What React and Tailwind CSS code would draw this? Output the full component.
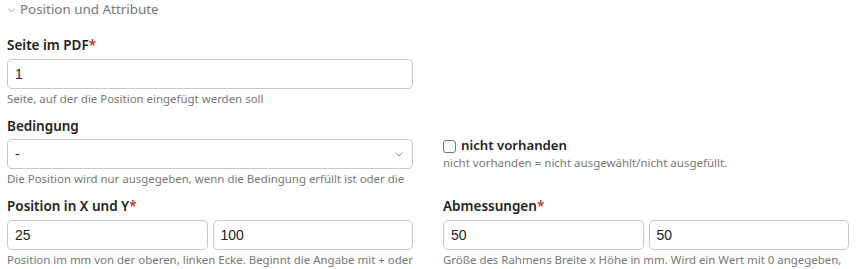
export default function App() {
  const font = { fontFamily: '"Noto Sans", "Open Sans", sans-serif' };
  const Label = ({ children, req }) => (
    <div className="h-[20px] leading-[20px] text-[13.5px] font-semibold text-[#222] mb-[4px]">
      {children}
      {req && <span className="text-[#c9302c]">*</span>}
    </div>
  );
  const Help = ({ children }) => (
    <div className="h-[20px] leading-[20px] text-[11.45px] text-[#777] whitespace-nowrap overflow-hidden">
      {children}
    </div>
  );
  const Input = ({ value }) => (
    <div className="h-[30px] border border-[#c8c8c8] rounded-[5px] bg-white flex items-center px-[7px] text-[14px] text-[#222] font-['Liberation_Sans',sans-serif] flex-1 min-w-0">
      {value}
    </div>
  );
  return (
    <div className="w-[857px] h-[269px] bg-white overflow-hidden pl-[7px] pr-[8px]" style={font}>
      <div className="h-[20px] flex items-center gap-[5px] text-[13.4px] text-[#777] -mt-[1px]">
        <svg width="7" height="5" viewBox="0 0 7 5" className="ml-[1px] mt-[3px]">
          <polyline points="0.5,0.8 3.5,3.8 6.5,0.8" fill="none" stroke="#999" strokeWidth="1" />
        </svg>
        <span>Position und Attribute</span>
      </div>
      <div className="h-[16px]" />
      <div className="grid grid-cols-2 gap-x-[30px]">
        <div>
          <Label req>Seite im PDF</Label>
          <Input value="1" />
          <Help>Seite, auf der die Position eingefügt werden soll</Help>
        </div>
        <div />
        <div className="mt-[7px]">
          <div className="h-[20px] leading-[20px] text-[13.5px] font-semibold text-[#222] mb-[3px]">Bedingung</div>
          <div className="h-[30px] border border-[#c8c8c8] rounded-[5px] bg-white flex items-center justify-between px-[7px] text-[14px] text-[#222] font-['Liberation_Sans',sans-serif]">
            <span>-</span>
            <svg width="8" height="5" viewBox="0 0 8 5" className="mr-[2px]">
              <polyline points="0.5,0.5 4,4 7.5,0.5" fill="none" stroke="#999" strokeWidth="1" />
            </svg>
          </div>
          <Help>Die Position wird nur ausgegeben, wenn die Bedingung erfüllt ist oder die</Help>
        </div>
        <div className="mt-[7px] pt-[20px]">
          <div className="h-[20px] flex items-center gap-[5px] text-[13.2px] font-semibold text-[#222]">
            <span className="w-[13px] h-[13px] border border-[#777] rounded-[3px] bg-white inline-block" />
            <span>nicht vorhanden</span>
          </div>
          <div className="h-[12px] leading-[12px] text-[11.5px] text-[#777] mt-[1px]">
            nicht vorhanden = nicht ausgewählt/nicht ausgefüllt.
          </div>
        </div>
        <div className="mt-[7px]">
          <Label req>Position in X und Y</Label>
          <div className="flex gap-[5px]">
            <Input value="25" />
            <Input value="100" />
          </div>
          <Help>Position im mm von der oberen, linken Ecke. Beginnt die Angabe mit + oder</Help>
        </div>
        <div className="mt-[7px]">
          <Label req>Abmessungen</Label>
          <div className="flex gap-[5px]">
            <Input value="50" />
            <Input value="50" />
          </div>
          <Help>Größe des Rahmens Breite x Höhe in mm. Wird ein Wert mit 0 angegeben,</Help>
        </div>
      </div>
    </div>
  );
}
